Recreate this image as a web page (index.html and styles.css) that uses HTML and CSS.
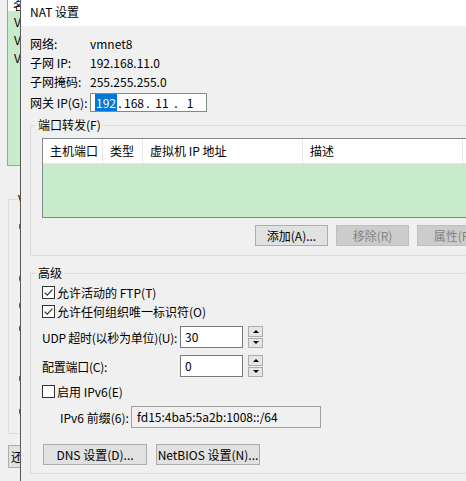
FILE: index.html
```html
<!DOCTYPE html>
<html lang="zh-CN">
<head>
<meta charset="utf-8">
<title>NAT 设置</title>
<link rel="stylesheet" href="styles.css">
</head>
<body>
<div class="screen">
  <div class="bgwin">
    <div class="bg-list">
      <div class="bg-head">名</div>
      <div class="bg-item">V</div>
      <div class="bg-item">V</div>
      <div class="bg-item">V</div>
    </div>
    <fieldset class="bg-group">
      <legend>V</legend>
      <div class="bg-radio r1"></div>
      <div class="bg-radio r2"></div>
      <div class="bg-radio r3"></div>
      <div class="bg-radio r4"></div>
      <div class="bg-radio r5"></div>
      <div class="bg-radio r6"></div>
    </fieldset>
    <div class="bg-btn">还</div>
  </div>

  <div class="dialog">
    <div class="titlebar">NAT 设置</div>
    <div class="body">
      <div class="info">
        <span>网络:</span><span>vmnet8</span>
        <span>子网 IP:</span><span>192.168.11.0</span>
        <span>子网掩码:</span><span>255.255.255.0</span>
      </div>
      <div class="gw">
        <span class="gw-label">网关 IP(G):</span>
        <div class="ipbox">
          <span class="seg"><span class="hl">192</span></span><span class="dot">.</span><span class="seg">168</span><span class="dot">.</span><span class="seg">11</span><span class="dot">.</span><span class="seg">1</span>
        </div>
      </div>

      <fieldset class="grp grp-ports">
        <legend>端口转发(F)</legend>
        <div class="tbl">
          <div class="thead">
            <div class="th c1">主机端口</div>
            <div class="th c2">类型</div>
            <div class="th c3">虚拟机 IP 地址</div>
            <div class="th c4">描述</div>
            <div class="th c5"></div>
          </div>
          <div class="tbody"></div>
        </div>
        <div class="btns">
          <div class="btn">添加(A)...</div>
          <div class="btn disabled">移除(R)</div>
          <div class="btn disabled">属性(P)</div>
        </div>
      </fieldset>

      <fieldset class="grp grp-adv">
        <legend>高级</legend>
        <div class="chk">
          <svg class="box" width="13" height="13" viewBox="0 0 13 13"><rect x="0.5" y="0.5" width="12" height="12" fill="#fff" stroke="#333"/><path d="M2.6 6.6 L5.2 9.1 L10.4 3.6" fill="none" stroke="#333" stroke-width="1.3"/></svg>
          <span>允许活动的 FTP(T)</span>
        </div>
        <div class="chk">
          <svg class="box" width="13" height="13" viewBox="0 0 13 13"><rect x="0.5" y="0.5" width="12" height="12" fill="#fff" stroke="#333"/><path d="M2.6 6.6 L5.2 9.1 L10.4 3.6" fill="none" stroke="#333" stroke-width="1.3"/></svg>
          <span>允许任何组织唯一标识符(O)</span>
        </div>
        <div class="field f-udp">
          <span class="flabel">UDP 超时(以秒为单位)(U):</span>
          <div class="edit">30</div>
          <div class="spin"><span class="up"></span><span class="down"></span></div>
        </div>
        <div class="field f-port">
          <span class="flabel">配置端口(C):</span>
          <div class="edit">0</div>
          <div class="spin"><span class="up"></span><span class="down"></span></div>
        </div>
        <div class="chk chk-ipv6">
          <svg class="box" width="13" height="13" viewBox="0 0 13 13"><rect x="0.5" y="0.5" width="12" height="12" fill="#fff" stroke="#333"/></svg>
          <span>启用 IPv6(E)</span>
        </div>
        <div class="field f-prefix">
          <span class="plabel">IPv6 前缀(6):</span>
          <div class="edit ro">fd15:4ba5:5a2b:1008::/64</div>
        </div>
        <div class="bottom-btns">
          <div class="btn wide">DNS 设置(D)...</div>
          <div class="btn wide">NetBIOS 设置(N)...</div>
        </div>
      </fieldset>
    </div>
  </div>
</div>
</body>
</html>
```

FILE: styles.css
```css
* { box-sizing: border-box; }

body {
  margin: 0;
  width: 466px;
  height: 481px;
  overflow: hidden;
  background: #f0f0f0;
  font-family: "Noto Sans CJK SC", "Noto Sans", sans-serif;
  font-size: 12px;
  color: #000;
}

.screen {
  display: flex;
  height: 481px;
  width: 600px;
}

/* background window strip */
.bgwin {
  width: 20px;
  flex: none;
  overflow: hidden;
}

.bg-list {
  margin-left: 7px;
  width: 13px;
  height: 166px;
  border-left: 1px solid #a0a0a0;
  border-bottom: 1px solid #a0a0a0;
  background: #c8eccb;
  overflow: hidden;
}

.bg-head {
  height: 11px;
  background: #fff;
  padding-left: 5px;
  line-height: 11px;
  overflow: hidden;
  white-space: nowrap;
}

.bg-item {
  height: 18px;
  line-height: 18px;
  padding-left: 6px;
  white-space: nowrap;
  overflow: hidden;
}

.bg-head + .bg-item { margin-top: 2px; }

.bg-group {
  margin: 26px 0 0 8px;
  padding: 0 0 0 8px;
  border: 1px solid #dcdcdc;
  border-right: none;
  width: 12px;
  height: 242px;
  min-width: 0;
}

.bg-group legend {
  padding: 0 1px;
  line-height: 14px;
  white-space: nowrap;
}

.bg-radio {
  width: 13px;
  height: 13px;
  border: 1px solid #333;
  border-radius: 50%;
  background: #fff;
  margin-left: 2px;
}
.r1 { margin-top: 14px; }
.r2 { margin-top: 39px; }
.r3 { margin-top: 14px; }
.r4 { margin-top: 10px; }
.r5 { margin-top: 37px; }
.r6 { margin-top: 20px; }

.bg-btn {
  margin: 11px 0 0 8px;
  width: 12px;
  height: 23px;
  border: 1px solid #adadad;
  border-right: none;
  background: #e1e1e1;
  padding-left: 2px;
  line-height: 21px;
  white-space: nowrap;
  overflow: hidden;
}

/* dialog */
.dialog {
  flex: none;
  width: 560px;
  border-left: 1px solid #5a5a5a;
  display: flex;
  flex-direction: column;
}

.titlebar {
  height: 26px;
  background: #fff;
  padding-left: 9px;
  line-height: 24px;
}

.body {
  flex: 1;
  padding: 8px 0 0 9px;
}

.info {
  display: grid;
  grid-template-columns: 60px auto;
  grid-auto-rows: 19px;
  line-height: 19px;
}

.gw {
  display: flex;
  align-items: center;
  height: 19px;
  margin-top: 2px;
}

.gw-label { width: 60px; flex: none; }

.ipbox {
  width: 117px;
  height: 19px;
  border: 1px solid #7c8f7c;
  background: #fff;
  display: flex;
  align-items: center;
  padding-left: 3px;
  line-height: 14px;
}

.seg {
  width: 24px;
  text-align: center;
  flex: none;
}

.dot {
  width: 4px;
  text-align: center;
  flex: none;
}

.hl {
  background: #0078d7;
  color: #fff;
  padding: 0 1px;
}

/* group boxes */
.grp {
  width: 472px;
  border: 1px solid #dcdcdc;
  margin: 0;
  min-width: 0;
}

.grp legend {
  margin-left: 5px;
  padding: 0 2px;
  line-height: 14px;
}

.grp-ports {
  margin-top: 6px;
  padding: 6px 11px 9px 0;
}

.tbl {
  margin-left: 11px;
  border: 1px solid #828790;
}

.thead {
  display: flex;
  height: 25px;
  background: #fff;
  border-bottom: 1px solid #e5e5e5;
}

.th {
  flex: none;
  height: 24px;
  line-height: 24px;
  padding-left: 7px;
  border-right: 1px solid #e5e5e5;
  white-space: nowrap;
}
.c1 { width: 60px; }
.c2 { width: 40px; }
.c3 { width: 160px; }
.c4 { width: 160px; }
.c5 { flex: 1; border-right: none; }

.tbody {
  height: 53px;
  background: #c8eccb;
}

.btns {
  display: flex;
  justify-content: flex-end;
  gap: 8px;
  margin-top: 7px;
}

.btn {
  width: 73px;
  height: 21px;
  border: 1px solid #adadad;
  background: #e1e1e1;
  text-align: center;
  line-height: 19px;
  white-space: nowrap;
}

.btn.disabled {
  background: #cccccc;
  border-color: #bfbfbf;
  color: #838383;
}

.grp-adv {
  margin-top: 10px;
  padding: 3px 11px 8px 0;
}

.chk {
  display: flex;
  align-items: center;
  gap: 2px;
  height: 19px;
  margin-left: 11px;
}

.box { flex: none; display: block; }

.field {
  display: flex;
  align-items: center;
  height: 22px;
  margin-left: 11px;
}

.f-udp { margin-top: 5px; }
.f-port { margin-top: 7px; }
.chk-ipv6 { margin-top: 5px; }
.f-prefix { margin-top: 5px; }

.flabel {
  width: 138px;
  flex: none;
  white-space: nowrap;
  letter-spacing: -0.25px;
}

.plabel {
  width: 89px;
  flex: none;
  padding-left: 18px;
  white-space: nowrap;
}

.edit {
  width: 63px;
  height: 22px;
  border: 1px solid #7a7a7a;
  background: #fff;
  padding-left: 4px;
  line-height: 20px;
  flex: none;
}

.edit.ro {
  width: 190px;
  background: #f0f0f0;
  border-color: #a0a0a0;
  padding-left: 5px;
}

.spin {
  margin-left: 5px;
  width: 15px;
  height: 22px;
  display: flex;
  flex-direction: column;
  gap: 1px;
}

.spin span {
  flex: 1;
  border: 1px solid #adadad;
  background: #e6e6e6;
  display: flex;
  align-items: center;
  justify-content: center;
}

.spin .up::after {
  content: "";
  border-left: 3px solid transparent;
  border-right: 3px solid transparent;
  border-bottom: 3px solid #000;
}

.spin .down::after {
  content: "";
  border-left: 3px solid transparent;
  border-right: 3px solid transparent;
  border-top: 3px solid #000;
}

.bottom-btns {
  display: flex;
  gap: 9px;
  margin: 16px 0 0 12px;
}

.btn.wide { width: 104px; }
```
